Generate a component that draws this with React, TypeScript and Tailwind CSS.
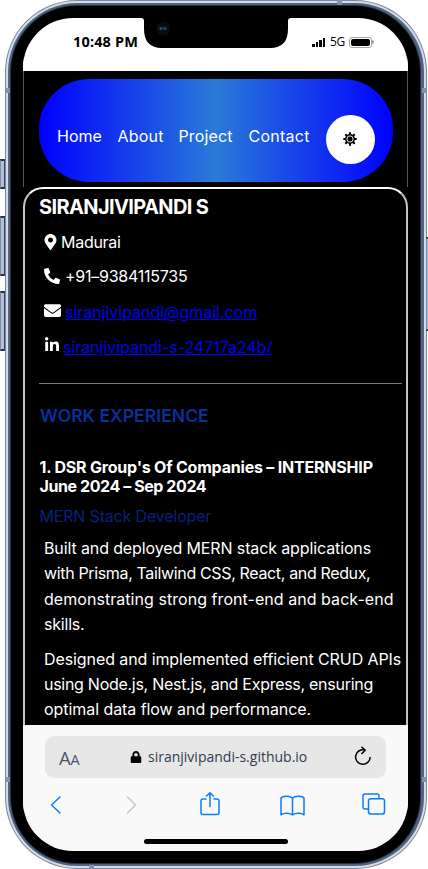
import React from "react";
import { FaEnvelope, FaLinkedinIn, FaLock, FaPhoneAlt, FaMapMarkerAlt } from "react-icons/fa";

function SideButton({ className }: { className: string }) {
  return (
    <div
      className={`absolute w-[5px] border-y-2 border-x border-y-[#263247] border-l-[#7c8ba6] border-r-[#34435b] bg-[#b4c0d8] ${className}`}
    />
  );
}

function StatusBar() {
  return (
    <div className="relative h-[53px] shrink-0 border-x border-white bg-white text-black">
      <div className="flex items-center justify-between pl-[49px] pr-[33px] pt-[14px]">
        <span className="font-['Open_Sans',sans-serif] text-[14.5px] font-bold leading-[20px] tracking-[0.15px]">
          10:48 PM
        </span>
        <div className="flex items-center gap-[5px]">
          <div className="flex h-[9px] items-end gap-[1px]">
            <i className="h-[3px] w-[3px] bg-black" />
            <i className="h-[5px] w-[2px] bg-black" />
            <i className="h-[7px] w-[3px] bg-black" />
            <i className="h-[9px] w-[2px] bg-black" />
          </div>
          <span className="w-[14px] whitespace-nowrap font-['Open_Sans',sans-serif] text-[12px] leading-[20px] tracking-[-0.4px]">5G</span>
          <div className="flex items-center">
            <div className="h-[11px] w-[23px] rounded-[3px] border border-[#a3a3a3] p-[1px]">
              <div className="h-full rounded-[2px] bg-black" />
            </div>
            <i className="h-[4px] w-[2px] rounded-r bg-[#a3a3a3]" />
          </div>
        </div>
      </div>
      <svg className="absolute left-[117px] top-[-12px]" width="150" height="43" viewBox="0 0 150 43">
        <path d="M0 0H150V12Q147 12 147 15V23Q147 42 129 42H21Q3 42 3 23V15Q3 12 0 12Z" fill="#000" />
        <rect x="43" y="-4" width="63" height="5" rx="2" fill="#0b0b0b" stroke="#262626" />
        <circle cx="22" cy="22.500" r="7" fill="#0b0b0d" />
        <circle cx="20" cy="22.500" r="1.800" fill="#22495a" />
        <circle cx="24" cy="22.500" r="1.800" fill="#29316e" />
      </svg>
    </div>
  );
}

function Nav() {
  return (
    <div className="shrink-0 border-x border-[#555] pb-[5px] pl-[15px] pr-[14px] pt-2">
      <nav className="flex h-[103px] items-center rounded-[50px] bg-[linear-gradient(90deg,#0000ff,#2a7ad8_50%,#0000ff)] pl-[18px] text-[16px] leading-[24px] text-white">
        <span className="mt-[11px] w-[60.5px] shrink-0 whitespace-nowrap">Home</span>
        <span className="mt-[11px] w-[61px] shrink-0 whitespace-nowrap tracking-[0.2px]">About</span>
        <span className="mt-[11px] w-[70px] shrink-0 whitespace-nowrap tracking-[0.15px]">Project</span>
        <span className="mt-[11px] w-[77px] shrink-0 whitespace-nowrap tracking-[0.25px]">Contact</span>
        <div className="mt-[18px] flex size-[49px] shrink-0 items-center justify-center rounded-full bg-white">
          <svg className="mt-[-2px]" width="14" height="14" viewBox="0 0 14 14">
            <path d="M7 .3V13.700M.3 7H13.700M2.300 2.300L11.700 11.700M11.700 2.300L2.300 11.700" stroke="#000" strokeWidth="2" />
            <circle cx="7" cy="7" r="4.900" fill="#000" />
            <circle cx="7" cy="7" r="3.100" fill="none" stroke="#fff" strokeWidth=".9" />
          </svg>
        </div>
      </nav>
    </div>
  );
}

function Resume() {
  return (
    <main className="h-[600px] shrink-0 rounded-[20px] border-2 border-x-[#c4c4c4] border-t-white bg-black pl-[14px] pr-[4px] text-white">
      <h1 className="mt-[4px] whitespace-nowrap text-[20px] font-bold leading-[28px] tracking-[-0.62px]">SIRANJIVIPANDI S</h1>
      <div className="mt-[9px] flex h-[24px] items-center pl-[5px] text-[16px]">
        <FaMapMarkerAlt className="mr-[4px] w-[13px] text-[16px]" />
        <span className="whitespace-nowrap tracking-[-0.28px]">Madurai</span>
      </div>
      <div className="mt-[10px] flex h-[24px] items-center pl-[5px] text-[16px]">
        <FaPhoneAlt className="mr-[5px] text-[16px]" />
        <span className="whitespace-nowrap tracking-[-0.25px]">+91–9384115735</span>
      </div>
      <div className="mt-[12px] flex h-[24px] items-center pl-[5px] text-[16px]">
        <FaEnvelope className="mb-[3px] mr-[4px] text-[17px]" />
        <a className="whitespace-nowrap tracking-[-0.03px] text-[#0000ee] underline">siranjivipandi@gmail.com</a>
      </div>
      <div className="mt-[11px] flex h-[24px] items-center pl-[5px] text-[16px]">
        <FaLinkedinIn className="mb-[4px] mr-[3px] text-[16px]" />
        <a className="whitespace-nowrap tracking-[-0.04px] text-[#0000ee] underline">siranjivipandi-s-24717a24b/</a>
      </div>
      <hr className="mt-[24px] border-t border-[#777]" />
      <h2 className="mt-[19px] whitespace-nowrap pl-[1px] text-[17.500px] font-semibold leading-[26px] tracking-[0.06px] text-[#06309b]">WORK EXPERIENCE</h2>
      <h3 className="mt-[29px] whitespace-nowrap pl-[0.5px] text-[16px] font-bold leading-[19px]">
        <span className="block tracking-[-0.2px]">1. DSR Group&apos;s Of Companies – INTERNSHIP</span>
        <span className="block tracking-[-0.42px]">June 2024 – Sep 2024</span>
      </h3>
      <h4 className="mt-[8px] whitespace-nowrap pl-[0.5px] text-[16px] leading-[24px] tracking-[-0.17px] text-[#04237c]">MERN Stack Developer</h4>
      <p className="mt-[8px] whitespace-nowrap pl-[5px] text-[16px] leading-[25.300px]">
        <span className="block tracking-[-0.12px]">Built and deployed MERN stack applications</span>
        <span className="block tracking-[-0.35px]">with Prisma, Tailwind CSS, React, and Redux,</span>
        <span className="block tracking-[0.05px]">demonstrating strong front-end and back-end</span>
        <span className="block tracking-[-0.2px]">skills.</span>
      </p>
      <p className="mt-[10px] whitespace-nowrap pl-[5px] text-[16px] leading-[25px]">
        <span className="block tracking-[-0.09px]">Designed and implemented efficient CRUD APIs</span>
        <span className="block tracking-[-0.28px]">using Node.js, Nest.js, and Express, ensuring</span>
        <span className="block tracking-[-0.06px]">optimal data flow and performance.</span>
      </p>
    </main>
  );
}

function BrowserBar() {
  const line = { fill: "none", stroke: "#087cff", strokeWidth: 1.5, strokeLinecap: "round", strokeLinejoin: "round" } as const;
  return (
    <footer className="relative flex h-[126px] shrink-0 flex-col border-x border-[#f9f9f9] bg-[#f9f9f9]">
      <div className="mx-[21px] mt-[11px] flex h-[42px] shrink-0 items-center rounded-[9px] bg-[#e7e7e7] pl-[14px] pr-[14px] font-['Open_Sans',sans-serif] text-[#303b50]">
        <span className="w-[71px] whitespace-nowrap pt-[2px] text-[18.5px] leading-none tracking-[-0.2px] text-[#4a566c]">
          A<span className="text-[14.5px]">A</span>
        </span>
        <FaLock className="mt-[-1px] text-[12px] text-black" />
        <span className="ml-[6px] whitespace-nowrap text-[14px] leading-[20px]">siranjivipandi-s.github.io</span>
        <svg className="ml-auto mt-[-2px]" width="18" height="20" viewBox="0 0 18 20" fill="none" stroke="#000" strokeWidth="1.500">
          <path d="M16.200 11A7.300 7.300 0 1 1 11 4" />
          <path d="M7.500 .8L11.200 4.300L7.500 8" />
        </svg>
      </div>
      <div className="flex items-center pl-[26px] pt-[14px]">
        <svg width="12" height="26" viewBox="0 0 12 26" {...line}><path d="M10 5L1.500 13L10 21" /></svg>
        <svg className="ml-[64px]" width="12" height="26" viewBox="0 0 12 26" {...line} stroke="#c8c8c8"><path d="M1.500 5L9.500 13L1.500 21" /></svg>
        <svg className="ml-[61.5px]" width="20" height="26" viewBox="0 0 20 26" {...line}>
          <path d="M6 7H3Q1 7 1 9V20.500Q1 22.500 3 22.500H17Q19 22.500 19 20.500V9Q19 7 17 7H14M10 14.500V1M6.500 4L10 .8L13.500 4" />
        </svg>
        <svg className="ml-[60px]" width="25" height="26" viewBox="0 0 25 26" {...line}>
          <path d="M12.500 6.500C11 3.700 3 3.200 1 6V22.800C4 20.800 9 20.800 12.500 22.800C16 20.800 21 20.800 24 22.800V6C22 3.200 14 3.700 12.500 6.500V22.500" />
        </svg>
        <svg className="ml-[57.5px]" width="24" height="26" viewBox="0 0 24 26" {...line}>
          <path d="M6 17H3Q1 17 1 15V4Q1 2 3 2H15Q17 2 17 4V6" />
          <rect x="6.500" y="6.700" width="16" height="15.300" rx="2.200" />
        </svg>
      </div>
      <div className="mx-auto mt-auto mb-[7px] h-[5px] w-[144px] rounded-full bg-black" />
    </footer>
  );
}

export default function App() {
  return (
    <div className="relative h-[869px] w-[428px] overflow-hidden bg-white font-['Inter',sans-serif]">
      <SideButton className="left-0 top-[159px] h-[30px]" />
      <SideButton className="left-0 top-[216px] h-[60px]" />
      <SideButton className="left-0 top-[291px] h-[60px]" />
      <SideButton className="left-[426px] top-[237px] h-[94px]" />
      <div className="ml-[5px] h-[869px] w-[422px] rounded-[72px] bg-[#7c879b] p-px">
        <div className="h-full rounded-[71px] bg-[#d6dbe7] p-[2px]">
          <div className="h-full rounded-[69px] bg-[#50647f] p-[2px] pr-[3px]">
            <div className="h-full rounded-[67px] bg-[#252f3d] p-px">
              <div className="h-full rounded-[66px] bg-black pl-[12px] pr-[12px] pt-[12px]">
                <div className="flex h-[833px] w-[385px] flex-col overflow-hidden rounded-[50px] bg-black">
                  <StatusBar />
                  <div className="flex h-[654px] shrink-0 flex-col overflow-hidden">
                    <Nav />
                    <Resume />
                  </div>
                  <BrowserBar />
                </div>
              </div>
            </div>
          </div>
        </div>
      </div>
      <i className="absolute left-[5px] top-[88px] h-[5px] w-[5px] bg-[#8390b0]" />
      <i className="absolute left-[5px] top-[777px] h-[5px] w-[5px] bg-[#8390b0]" />
      <i className="absolute left-[422px] top-[88px] h-[5px] w-[5px] bg-[#8390b0]" />
      <i className="absolute left-[422px] top-[777px] h-[5px] w-[5px] bg-[#8390b0]" />
      <i className="absolute left-[337px] top-0 h-[5px] w-[5px] bg-[#8390b0]" />
      <i className="absolute left-[89px] top-[865px] h-[4px] w-[5px] bg-[#8390b0]" />
    </div>
  );
}
